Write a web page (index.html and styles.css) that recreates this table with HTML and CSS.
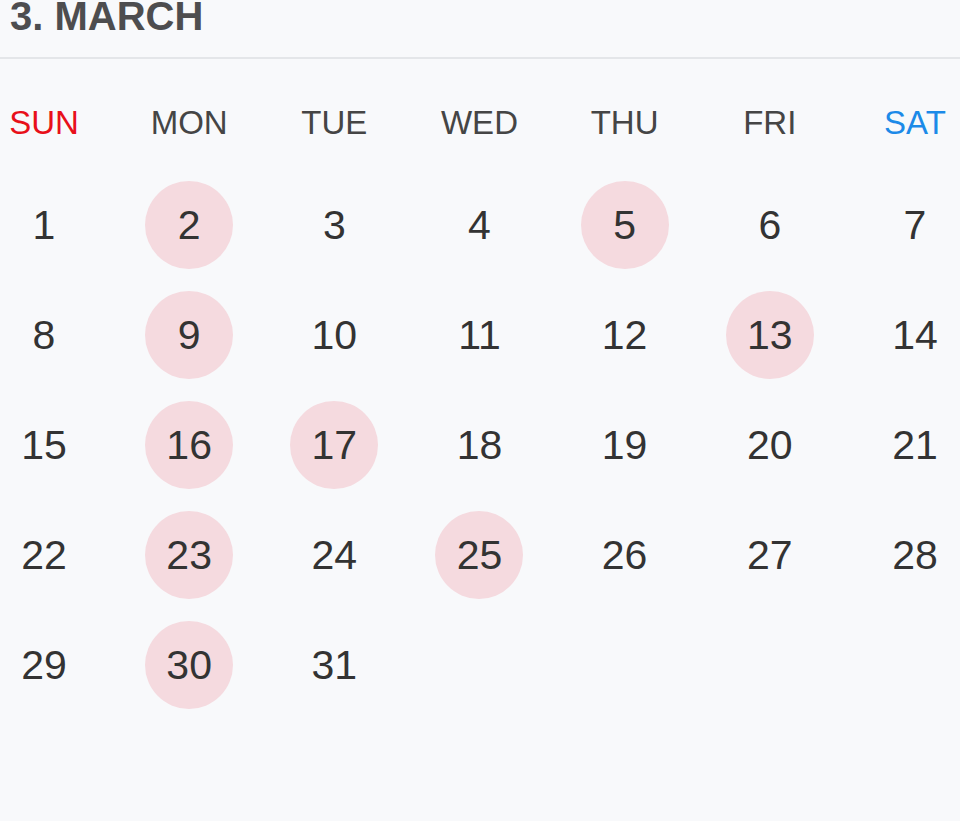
FILE: index.html
```html
<!DOCTYPE html>
<html lang="en">
<head>
<meta charset="utf-8">
<title>3. March</title>
<link rel="stylesheet" href="styles.css">
</head>
<body>
<div class="calendar">
  <header class="cal-header">
    <h1 class="cal-title">3. MARCH</h1>
  </header>
  <div class="weekdays">
    <div class="wd sun">SUN</div>
    <div class="wd">MON</div>
    <div class="wd">TUE</div>
    <div class="wd">WED</div>
    <div class="wd">THU</div>
    <div class="wd">FRI</div>
    <div class="wd sat">SAT</div>
  </div>
  <div class="days">
    <div class="day">1</div>
    <div class="day mark">2</div>
    <div class="day">3</div>
    <div class="day">4</div>
    <div class="day mark">5</div>
    <div class="day">6</div>
    <div class="day">7</div>
    <div class="day">8</div>
    <div class="day mark">9</div>
    <div class="day">10</div>
    <div class="day">11</div>
    <div class="day">12</div>
    <div class="day mark">13</div>
    <div class="day">14</div>
    <div class="day">15</div>
    <div class="day mark">16</div>
    <div class="day mark">17</div>
    <div class="day">18</div>
    <div class="day">19</div>
    <div class="day">20</div>
    <div class="day">21</div>
    <div class="day">22</div>
    <div class="day mark">23</div>
    <div class="day">24</div>
    <div class="day mark">25</div>
    <div class="day">26</div>
    <div class="day">27</div>
    <div class="day">28</div>
    <div class="day">29</div>
    <div class="day mark">30</div>
    <div class="day">31</div>
  </div>
</div>
</body>
</html>
```
FILE: styles.css
```css
html, body {
  margin: 0;
  padding: 0;
  background: #f8f9fb;
}

body {
  font-family: "Liberation Sans", Arial, sans-serif;
  color: #333333;
  width: 960px;
  height: 821px;
  overflow: hidden;
}

.cal-header {
  height: 57px;
  border-bottom: 2px solid #e4e6e9;
}

.cal-title {
  margin: 0;
  padding-left: 10px;
  font-size: 40px;
  line-height: 32px;
  font-weight: bold;
  color: #4d4d4f;
}

.weekdays,
.days {
  display: grid;
  grid-template-columns: repeat(7, 88px);
  justify-content: space-between;
  padding: 0 1px 0 0;
}

.weekdays {
  margin-top: 20px;
}

.wd {
  height: 88px;
  line-height: 88px;
  text-align: center;
  font-size: 33px;
  color: #454545;
}

.wd.sun { color: #e8101a; }
.wd.sat { color: #1c8ae8; }

.days {
  margin-top: 14px;
  row-gap: 22px;
}

.day {
  height: 88px;
  line-height: 88px;
  text-align: center;
  font-size: 41px;
  color: #333333;
  border-radius: 50%;
}

.day.mark {
  background: #f5dadf;
}
```
